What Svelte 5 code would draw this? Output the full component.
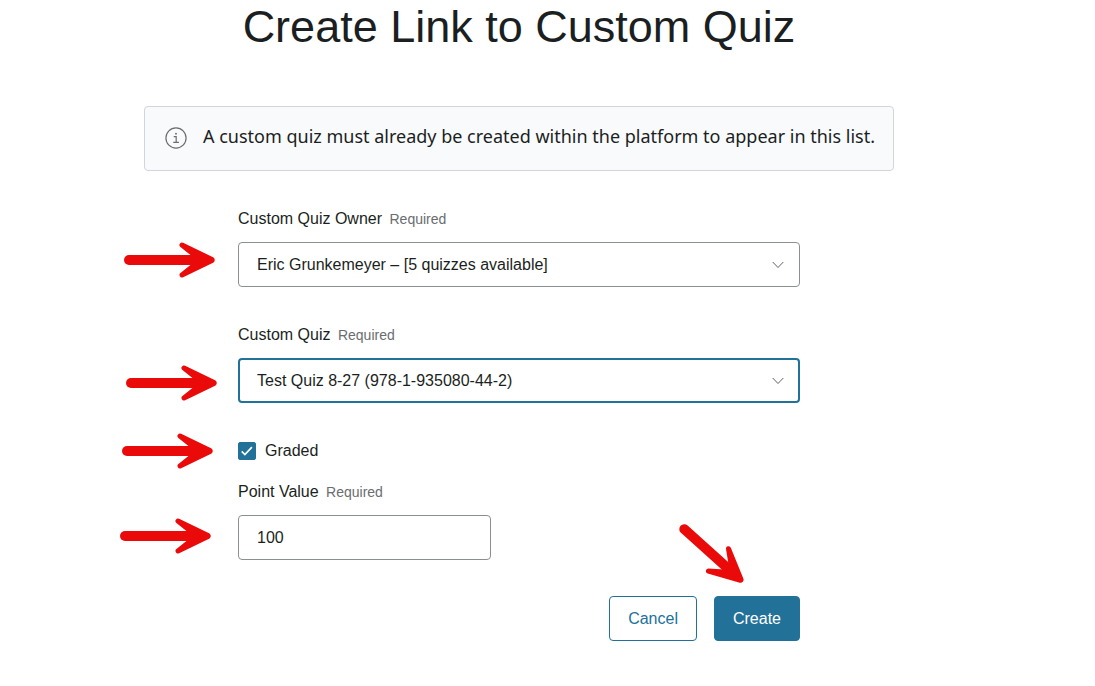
<script lang="ts">
	let owner = 'eric'
	let quiz = 'test-8-27'
	let graded = true
	let points = '100'

	// tip of each arrow, measured from the top left corner of the form
	const arrows = [
		{ x: -23, y: 54, angle: 0, tail: 5 },
		{ x: -21, y: 177, angle: 0, tail: 5 },
		{ x: -25, y: 245, angle: 0, tail: 5 },
		{ x: -27, y: 330, angle: 0, tail: 5 },
		{ x: 505, y: 376, angle: 42, tail: 12 }
	]
</script>

<main>
	<h1>Create Link to Custom Quiz</h1>

	<div class="notice" role="note">
		<svg class="info" viewBox="0 0 24 24" aria-hidden="true">
			<circle cx="12" cy="12" r="11" />
			<path d="M9.5 10.5h2.7v6M9 16.7h6.2" />
			<circle class="dot" cx="12" cy="7.4" r="1" />
		</svg>
		<p>A custom quiz must already be created within the platform to appear in this list.</p>
	</div>

	<form on:submit|preventDefault>
		<div class="field">
			<label for="owner">Custom Quiz Owner <span class="required">Required</span></label>
			<div class="select">
				<select id="owner" bind:value={owner}>
					<option value="eric">Eric Grunkemeyer – [5 quizzes available]</option>
				</select>
				<svg class="chevron" viewBox="0 0 12 8" aria-hidden="true"><path d="M.7 1 6 6.5 11.3 1" /></svg>
			</div>
		</div>

		<div class="field">
			<label for="quiz">Custom Quiz <span class="required">Required</span></label>
			<div class="select active">
				<select id="quiz" bind:value={quiz}>
					<option value="test-8-27">Test Quiz 8-27 (978-1-935080-44-2)</option>
				</select>
				<svg class="chevron" viewBox="0 0 12 8" aria-hidden="true"><path d="M.7 1 6 6.5 11.3 1" /></svg>
			</div>
		</div>

		<div class="check">
			<span class="box">
				<input type="checkbox" id="graded" bind:checked={graded} />
				{#if graded}
					<svg viewBox="0 0 18 18" aria-hidden="true"><path d="m3.7 9.4 3.2 3.2 7-7.4" /></svg>
				{/if}
			</span>
			<label for="graded">Graded</label>
		</div>

		<div class="field points">
			<label for="points">Point Value <span class="required">Required</span></label>
			<input type="text" id="points" bind:value={points} />
		</div>

		<div class="actions">
			<button type="button">Cancel</button>
			<button type="submit" class="primary">Create</button>
		</div>

		{#each arrows as { x, y, angle, tail }}
			<svg
				class="arrow"
				viewBox="0 0 91 36"
				style="left: {x}px; top: {y}px; rotate: {angle}deg"
				aria-hidden="true"
			>
				<path class="shaft" d="M{tail} 18H71" />
				<path class="head" d="M58 3 88 17.500Q88.500 18 88 18.500L58 33 73 21V15Z" />
			</svg>
		{/each}
	</form>
</main>

<style>
	:global(body) {
		background: #fff;
	}

	main {
		max-width: 750px;
		margin: 0 auto;
		padding: 0 57px 45px 0;
		font-family: 'Liberation Sans', Arial, sans-serif;
		font-size: 16px;
		line-height: 24px;
		color: #1b1f22;
	}

	h1 {
		margin: 0 0 53px;
		font-size: 45px;
		font-weight: 400;
		line-height: 53px;
		text-align: center;
	}

	.notice {
		display: flex;
		align-items: center;
		gap: 16px;
		box-sizing: border-box;
		min-height: 65px;
		padding: 16px 16px 18px 20px;
		border: 1px solid #d2d5d9;
		border-radius: 4px;
		background: #f9fafc;
	}

	.notice p {
		margin: 0 0 3px;
		font-family: 'Noto Sans', 'Open Sans', sans-serif;
		font-size: 18px;
	}

	.info {
		flex: none;
		width: 22px;
		height: 22px;
		fill: none;
		stroke: #6a6d70;
		stroke-width: 1.3;
	}

	.info .dot {
		fill: #6a6d70;
		stroke: none;
	}

	form {
		position: relative;
		max-width: 562px;
		margin: 35px auto 0;
	}

	.field {
		display: flex;
		flex-direction: column;
		gap: 10px;
		margin-bottom: 35px;
	}

	.field label {
		line-height: 26px;
	}

	.required {
		margin-left: 3px;
		font-size: 14px;
		color: #6a6d70;
	}

	.select {
		display: grid;
		align-items: center;
	}

	.select > * {
		grid-area: 1 / 1;
	}

	select,
	input[type='text'] {
		appearance: none;
		box-sizing: border-box;
		width: 100%;
		height: 45px;
		margin: 0;
		padding: 0 18px;
		border: 1px solid #8c8f92;
		border-radius: 4px;
		background: #fff;
		color: inherit;
		font: inherit;
	}

	.active select {
		padding: 0 17px;
		border: 2px solid #217199;
	}

	.chevron {
		justify-self: end;
		width: 12px;
		height: 8px;
		margin-right: 16px;
		fill: none;
		stroke: #5f6265;
		stroke-width: 1;
		pointer-events: none;
	}

	.check {
		display: flex;
		align-items: center;
		gap: 9px;
		height: 26px;
		margin-bottom: 15px;
	}

	.box {
		display: grid;
		width: 18px;
		height: 18px;
	}

	.box > * {
		grid-area: 1 / 1;
	}

	.box input {
		appearance: none;
		box-sizing: border-box;
		width: 18px;
		height: 18px;
		margin: 0;
		border: 1px solid #8c8f92;
		border-radius: 2px;
	}

	.box input:checked {
		border-color: #217199;
		background: #217199;
	}

	.box svg {
		fill: none;
		stroke: #fff;
		stroke-width: 1.7;
		pointer-events: none;
	}

	.points input {
		max-width: 253px;
	}

	.actions {
		display: flex;
		justify-content: flex-end;
		gap: 17px;
		margin-top: 36px;
	}

	button {
		height: 45px;
		padding: 0 18px;
		border: 1px solid #217199;
		border-radius: 4px;
		background: #fff;
		color: #217199;
		font: inherit;
		cursor: pointer;
	}

	.primary {
		background: #217199;
		color: #fff;
	}

	.arrow {
		position: absolute;
		width: 91px;
		height: 36px;
		margin: -18px 0 0 -91px;
		transform-origin: 100% 50%;
		fill: #ea0a0a;
		stroke: #ea0a0a;
		stroke-linejoin: round;
		pointer-events: none;
	}

	.shaft {
		stroke-width: 10;
		stroke-linecap: round;
	}

	.head {
		stroke-width: 5;
	}
</style>
